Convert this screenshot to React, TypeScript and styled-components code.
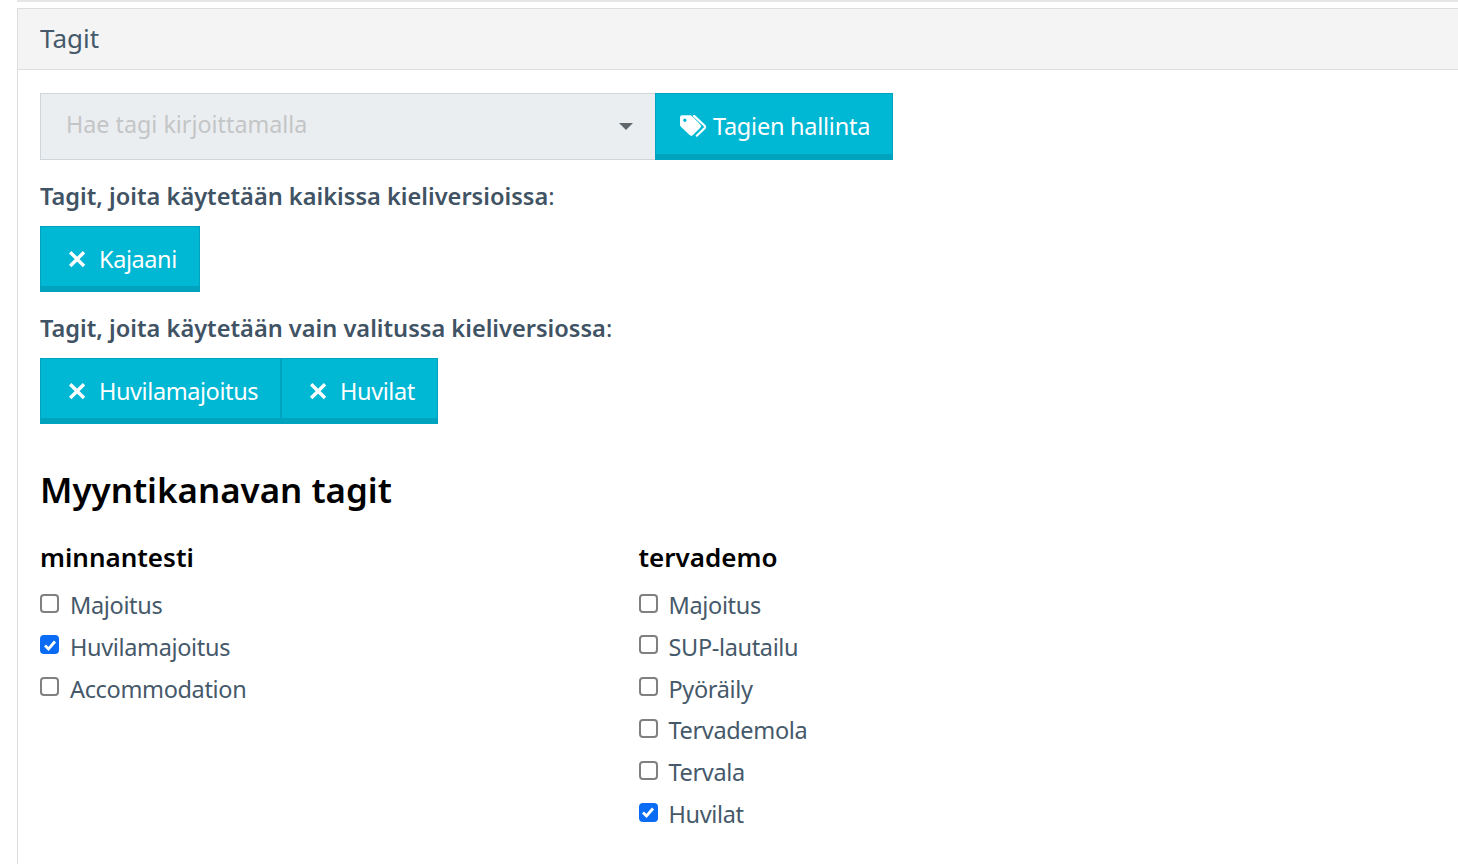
import React from "react";
import styled, { createGlobalStyle } from "styled-components";

const Global = createGlobalStyle`
  html, body { margin: 0; padding: 0; background: #fff; height: 100%; overflow: hidden; }
  body { font-family: "Noto Sans", "Open Sans", sans-serif; color: #3f5364; }
`;

const Page = styled.div`
  padding-left: 17px;
  height: 864px;
  overflow: hidden;
`;

const TopRule = styled.div`
  height: 2px;
  background: #e4e6e8;
  margin-bottom: 6px;
`;

const Card = styled.section`
  border: 1px solid #dcdddf;
  border-right: none;
  border-bottom: none;
  height: 856px;
`;

const CardHeader = styled.header`
  height: 61px;
  box-sizing: border-box;
  background: #f4f4f4;
  border-bottom: 1px solid #dcdddf;
  padding-left: 22px;
  font-size: 26px;
  line-height: 59px;
  color: #45596a;
`;

const CardBody = styled.div`
  padding: 23px 22px 0;
`;

const InputRow = styled.div`
  display: flex;
  height: 67px;
`;

const SelectBox = styled.div`
  width: 615px;
  box-sizing: border-box;
  background: #ebeef1;
  border: 1px solid #d0d5d9;
  border-right: none;
  padding: 0 22px 0 25px;
  display: flex;
  align-items: center;
  justify-content: space-between;
  color: #c4c5c6;
`;

const Placeholder = styled.span`
  font-size: 23.3px;
  margin-bottom: 5px;
`;

const Caret = styled.span`
  width: 0;
  height: 0;
  border-left: 7px solid transparent;
  border-right: 7px solid transparent;
  border-top: 7px solid #5f666c;
`;

const TealButton = styled.div`
  display: inline-flex;
  align-items: center;
  box-sizing: border-box;
  height: 66px;
  background: #00b7d4;
  border: 1px solid #00a3bd;
  border-bottom: 6px solid #00a3bd;
  color: #fff;
  font-size: 23.5px;
  letter-spacing: -0.42px;
  padding: 0 22px 0 26px;
  gap: 13px;
  white-space: nowrap;
`;

const ButtonLabel = styled.span`
  padding-top: 4px;
`;

const ManageButton = styled(TealButton)`
  height: 67px;
  padding: 0 22px 0 24px;
  gap: 6px;
  letter-spacing: -0.25px;
`;

const SubLabel = styled.p`
  margin: 0;
  font-size: 23.6px;
  line-height: 33px;
  font-weight: 600;
  color: #3f5364;
  padding: 20px 0 13px;
`;

const Colon = styled.span`
  font-weight: 400;
`;

const TagRow = styled.div`
  display: flex;
`;

const Heading = styled.h2`
  margin: 43px 0 0;
  font-size: 34.9px;
  line-height: 46px;
  font-weight: 600;
  color: #000;
`;

const Channels = styled.div`
  display: grid;
  grid-template-columns: 598.5px 1fr;
  margin-top: 26px;
`;

const ChannelName = styled.h3`
  margin: 0 0 9.2px;
  font-size: 26px;
  line-height: 36px;
  font-weight: 600;
  color: #000;
`;

const CheckRow = styled.label`
  display: flex;
  align-items: center;
  gap: 11px;
  height: 41.8px;
  font-size: 23.5px;
  letter-spacing: -0.35px;
  color: #45596a;
`;

const Box = styled.span<{ $on?: boolean }>`
  width: 19px;
  height: 19px;
  box-sizing: border-box;
  flex: none;
  border-radius: 4px;
  border: ${(p) => (p.$on ? "none" : "2px solid #808080")};
  background: ${(p) => (p.$on ? "#0a6cf5" : "#fff")};
  display: inline-flex;
  align-items: center;
  justify-content: center;
  position: relative;
  top: -2px;
`;

const XSvg = styled.svg`
  margin-top: 4px;
  flex: none;
`;

const TagsSvg = styled.svg`
  margin-top: 3px;
  flex: none;
`;

const X = () => (
  <XSvg width="19" height="19" viewBox="0 0 19 19" aria-hidden="true">
    <path d="M3.200 3.200 17 17M17 3.200 3.200 17" stroke="#fff" strokeWidth="3.400" fill="none" />
  </XSvg>
);

const TagsIcon = () => (
  <TagsSvg width="27" height="22" viewBox="0 0 25 20" aria-hidden="true">
    <path
      fill="#fff"
      fillRule="evenodd"
      d="M0 2a2 2 0 0 1 2-2h7.2a2.5 2.5 0 0 1 1.8.7l7.8 7.8a2.2 2.2 0 0 1 0 3.1l-6.8 6.8a2.2 2.2 0 0 1-3.100 0L.8 10.600A2.500 2.500 0 0 1 0 8.800zM4.500 3a1.600 1.600 0 1 0 0 3.200 1.600 1.600 0 0 0 0-3.200z"
    />
    <path
      d="M13 .6l9.800 9.200a1.500 1.500 0 0 1 0 2.200L15.500 19"
      stroke="#fff"
      strokeWidth="2"
      strokeLinecap="round"
      fill="none"
    />
  </TagsSvg>
);

const Check = () => (
  <svg width="14" height="14" viewBox="0 0 14 14" aria-hidden="true">
    <path d="M2 7.500 5.500 11 12 3.500" stroke="#fff" strokeWidth="2.800" fill="none" />
  </svg>
);

const Option = ({ label, on }: { label: string; on?: boolean }) => (
  <CheckRow>
    <Box $on={on}>{on && <Check />}</Box>
    {label}
  </CheckRow>
);

export default function App() {
  return (
    <Page>
      <Global />
      <TopRule />
      <Card>
        <CardHeader>Tagit</CardHeader>
        <CardBody>
          <InputRow>
            <SelectBox>
              <Placeholder>Hae tagi kirjoittamalla</Placeholder>
              <Caret />
            </SelectBox>
            <ManageButton>
              <TagsIcon />
              <ButtonLabel>Tagien hallinta</ButtonLabel>
            </ManageButton>
          </InputRow>
          <SubLabel>
            Tagit, joita käytetään kaikissa kieliversioissa<Colon>:</Colon>
          </SubLabel>
          <TagRow>
            <TealButton>
              <X />
              <ButtonLabel>Kajaani</ButtonLabel>
            </TealButton>
          </TagRow>
          <SubLabel>
            Tagit, joita käytetään vain valitussa kieliversiossa<Colon>:</Colon>
          </SubLabel>
          <TagRow>
            <TealButton>
              <X />
              <ButtonLabel>Huvilamajoitus</ButtonLabel>
            </TealButton>
            <TealButton>
              <X />
              <ButtonLabel>Huvilat</ButtonLabel>
            </TealButton>
          </TagRow>
          <Heading>Myyntikanavan tagit</Heading>
          <Channels>
            <div>
              <ChannelName>minnantesti</ChannelName>
              <Option label="Majoitus" />
              <Option label="Huvilamajoitus" on />
              <Option label="Accommodation" />
            </div>
            <div>
              <ChannelName>tervademo</ChannelName>
              <Option label="Majoitus" />
              <Option label="SUP-lautailu" />
              <Option label="Pyöräily" />
              <Option label="Tervademola" />
              <Option label="Tervala" />
              <Option label="Huvilat" on />
            </div>
          </Channels>
        </CardBody>
      </Card>
    </Page>
  );
}
